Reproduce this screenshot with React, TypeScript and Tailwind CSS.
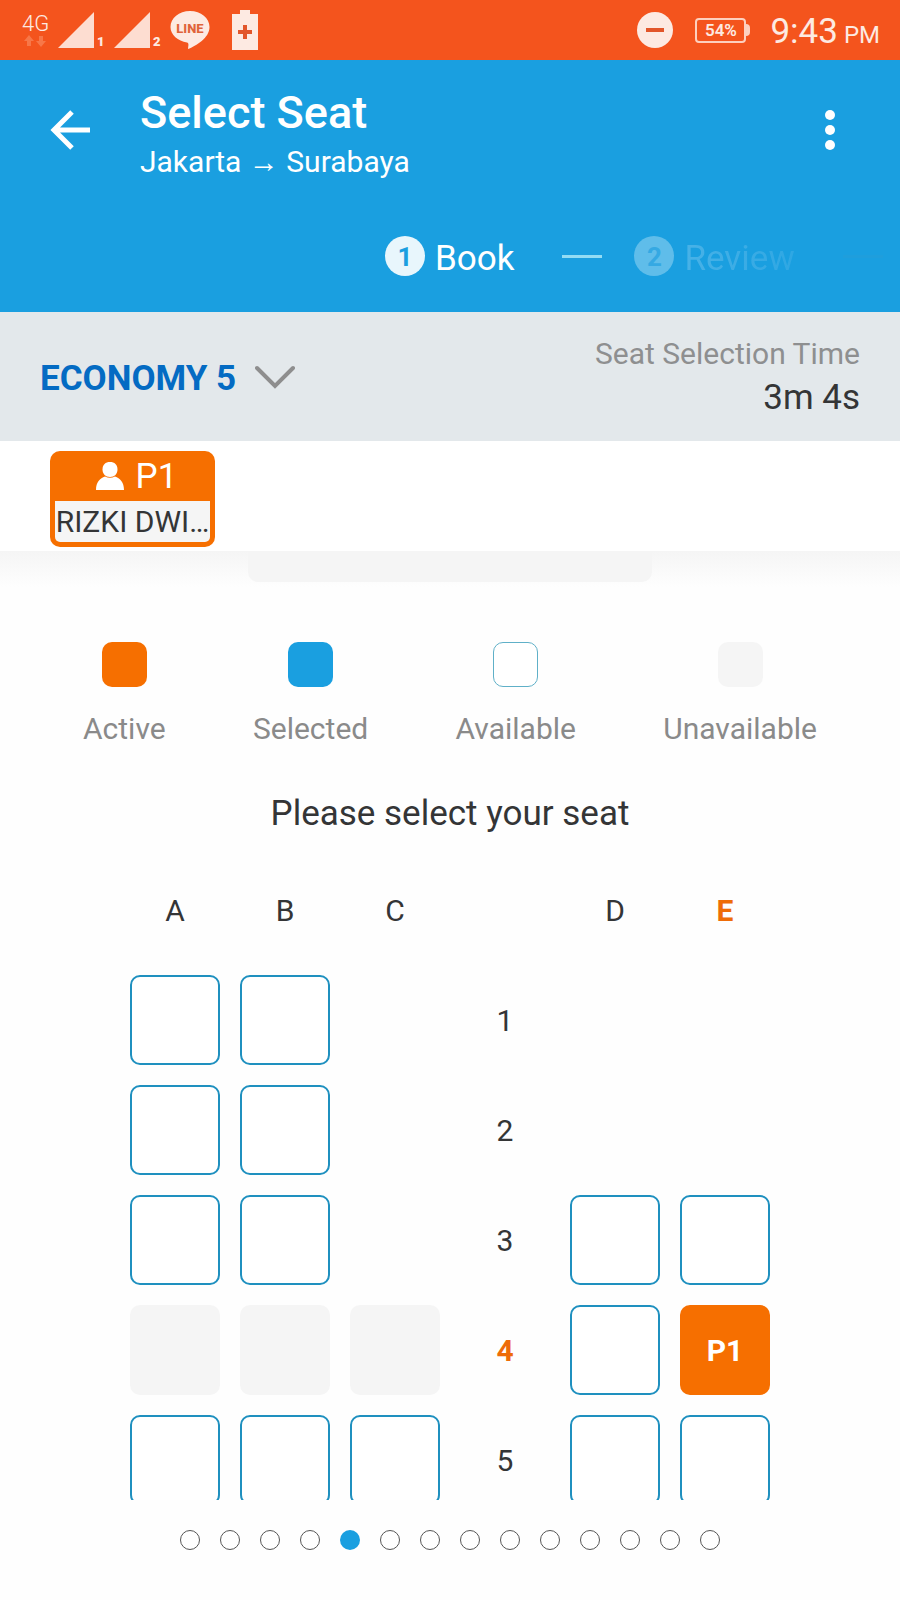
import React, { useState } from 'react';
import clsx from 'clsx';

type SeatState = 'available' | 'unavailable' | 'none';

interface SeatRow {
  row: number;
  seats: SeatState[];
}

const COLUMNS = ['A', 'B', 'C', 'D', 'E'];

const ROWS: SeatRow[] = [
  { row: 1, seats: ['available', 'available', 'none', 'none', 'none'] },
  { row: 2, seats: ['available', 'available', 'none', 'none', 'none'] },
  { row: 3, seats: ['available', 'available', 'none', 'available', 'available'] },
  { row: 4, seats: ['unavailable', 'unavailable', 'unavailable', 'available', 'available'] },
  { row: 5, seats: ['available', 'available', 'available', 'available', 'available'] },
];

const LEGEND = [
  { label: 'Active', swatch: 'bg-[#f66f00]' },
  { label: 'Selected', swatch: 'bg-[#1a9fe0]' },
  { label: 'Available', swatch: 'bg-white border border-[#5fb0c8]' },
  { label: 'Unavailable', swatch: 'bg-[#f5f5f5]' },
];

const WAGONS = Array.from({ length: 14 }, (_, i) => i + 1);

const SignalIcon = ({ sim }: { sim: number }) => (
  <div className="flex items-end">
    <svg width="36" height="36" viewBox="0 0 36 36" aria-hidden="true">
      <path d="M0 36L36 0V36Z" fill="#fdddd1" />
    </svg>
    <span className="w-5 pl-[3px] text-[13px] leading-[12px] font-black">{sim}</span>
  </div>
);

const StatusBar = () => (
  <div className="flex h-[60px] shrink-0 items-center justify-between bg-[#f4541d] pr-5 pl-[22px] text-[#fdeae2]">
    <div className="flex items-center">
      <div className="flex w-9 flex-col">
        <span className="text-[22px] leading-[22px] font-light">4G</span>
        <svg width="26" height="12" viewBox="0 0 26 12" fill="#f77748" aria-hidden="true">
          <path d="M7 0L12 6H9V11H5V6H2Z" />
          <path d="M19 12L14 6H17V1H21V6H24Z" />
        </svg>
      </div>
      <SignalIcon sim={1} />
      <SignalIcon sim={2} />
      <svg width="40" height="40" viewBox="0 0 40 40" className="mr-[22px]" aria-label="LINE">
        <path d="M20 1C9 1 0.500 8 0.500 17C0.500 25 8 31 17 32.500C19 33 18.500 35 18 39C26 36 39.500 28 39.500 17C39.500 8 31 1 20 1Z" fill="#fdeae2" />
        <text x="20" y="23" textAnchor="middle" fontSize="13" fontWeight="800" fill="#e0633a">LINE</text>
      </svg>
      <svg width="26" height="40" viewBox="0 0 26 40" aria-hidden="true">
        <path d="M8 0H18V4H26V40H0V4H8Z" fill="#fdeae2" />
        <path d="M11 15H15V20H20V24H15V29H11V24H6V20H11Z" fill="#e2562a" />
      </svg>
    </div>
    <div className="flex items-center">
      <svg width="36" height="36" viewBox="0 0 36 36" className="mr-[22px]" aria-hidden="true">
        <circle cx="18" cy="18" r="18" fill="#fdeae2" />
        <path d="M9 16H27V20H9Z" fill="#e2562a" />
      </svg>
      <div className="mr-5 flex items-center">
        <span className="flex h-[25px] w-[51px] items-center justify-center rounded border-2 border-[#fdd0be] text-[17px] leading-[20px] font-semibold">
          54%
        </span>
        <span className="h-3 w-1 rounded-r bg-[#fdd0be]" />
      </div>
      <div className="flex items-baseline gap-[6px] pt-[6px]">
        <span className="text-[35px] leading-[40px]">9:43</span>
        <span className="text-[24px] leading-[40px]">PM</span>
      </div>
    </div>
  </div>
);

const Header = () => (
  <header className="h-[252px] shrink-0 overflow-hidden bg-[#1a9fe0] text-white">
    <div className="flex h-[140px] items-center justify-between pr-[50px] pl-[50px]">
      <div className="flex items-center gap-[50px]">
        <button type="button" aria-label="Back">
          <svg width="40" height="40" viewBox="0 0 40 40" fill="none" stroke="white" strokeWidth="5">
            <path d="M40 20H4M22 2L4 20L22 38" />
          </svg>
        </button>
        <div className="pt-[10px]">
          <h1 className="text-[45px] leading-[54px] font-medium">Select Seat</h1>
          <p className="text-[30px] leading-[44px]">Jakarta → Surabaya</p>
        </div>
      </div>
      <button type="button" aria-label="More options" className="flex w-10 justify-center">
        <svg width="12" height="42" viewBox="0 0 12 42" fill="white">
          <circle cx="6" cy="6" r="5" />
          <circle cx="6" cy="21" r="5" />
          <circle cx="6" cy="36" r="5" />
        </svg>
      </button>
    </div>
    <ol className="mt-9 flex h-10 items-center pl-[calc(50%-65px)] text-[35px] leading-[40px] whitespace-nowrap">
      <li className="flex items-center gap-[10px]">
        <span className="flex size-10 items-center justify-center rounded-full bg-[#e8f6fc] pt-[2px] text-[26px] font-bold text-[#1a9fe0]">1</span>
        <span className="pt-[5px]">Book</span>
      </li>
      <li aria-hidden="true" className="mr-8 ml-12 h-[3px] w-10 shrink-0 bg-[#93dcf4]" />
      <li className="flex items-center gap-[10px]">
        <span className="flex size-10 items-center justify-center rounded-full bg-[#5fbdea] pt-[2px] text-[26px] font-bold text-[#35a9e3]">2</span>
        <span className="bg-gradient-to-r from-[#48b2e7] to-[#2ea7e3] bg-clip-text pt-[5px] text-transparent">Review</span>
      </li>
      <li aria-hidden="true" className="ml-12 h-[3px] w-10 shrink-0 bg-[#1f9edc]" />
    </ol>
  </header>
);

const WagonBar = () => (
  <div className="flex h-[129px] shrink-0 items-center justify-between bg-[#e3e8eb] px-10">
    <label className="relative flex items-center">
      <select
        aria-label="Wagon"
        defaultValue="ECONOMY 5"
        className="appearance-none bg-transparent pt-1 pr-[58px] text-[35px] leading-[42px] font-bold text-[#046bc3] outline-none"
      >
        <option>ECONOMY 5</option>
      </select>
      <svg width="40" height="24" viewBox="0 0 40 24" fill="none" stroke="#8e8e8e" strokeWidth="4" strokeLinecap="round" className="pointer-events-none absolute right-0">
        <path d="M2 3L20 21L38 3" />
      </svg>
    </label>
    <div className="text-right">
      <p className="text-[30px] leading-[42px] text-[#8e8f90]">Seat Selection Time</p>
      <p className="text-[35px] leading-[46px] text-[#343536]">3m 4s</p>
    </div>
  </div>
);

const PassengerBar = () => (
  <div className="h-[110px] shrink-0 bg-white px-[50px] pt-[10px]">
    <button type="button" className="flex h-[96px] w-[165px] flex-col rounded-[10px] bg-[#f66f00] px-[5px] pb-[5px]">
      <span className="flex h-[50px] w-full items-center justify-center gap-3 pl-2 text-[35px] leading-[50px] text-white">
        <svg width="28" height="28" viewBox="0 0 28 28" fill="white" aria-hidden="true">
          <path d="M14 0C18.500 0 21.500 2.500 21.500 7.500C21.500 12 18.500 15 14 15C9.500 15 6.500 12 6.500 7.500C6.500 2.500 9.500 0 14 0Z" />
          <path d="M0 28C0 20 4 16.500 9 14.500Q14 17 19 14.500C24 16.500 28 20 28 28Z" />
        </svg>
        <span className="pt-[2px]">P1</span>
      </span>
      <span className="h-[41px] w-full rounded-b-[5px] bg-[#f5f5f5] text-[30px] leading-[42px] whitespace-nowrap text-[#343536]">
        RIZKI DWI…
      </span>
    </button>
  </div>
);

export default function App() {
  const [selected, setSelected] = useState({ row: 4, column: 'E' });
  const [wagon, setWagon] = useState(5);

  const renderSeat = (row: number, column: string, state: SeatState) => {
    if (state === 'none') return <span key={column} />;
    const active = selected.row === row && selected.column === column;
    return (
      <button
        key={column}
        type="button"
        disabled={state === 'unavailable'}
        aria-label={`Seat ${row}${column}`}
        onClick={() => setSelected({ row, column })}
        className={clsx(
          'size-[90px] rounded-[10px]',
          active && 'bg-[#f66f00] pt-[2px] font-bold text-white',
          !active && state === 'available' && 'border-2 border-[#1f90bf] bg-white',
          state === 'unavailable' && 'bg-[#f5f5f5]'
        )}
      >
        {active && 'P1'}
      </button>
    );
  };

  return (
    <div className="flex h-screen flex-col bg-[#fefefe] font-[Roboto,sans-serif]">
      <StatusBar />
      <Header />
      <WagonBar />
      <PassengerBar />

      <main className="min-h-0 flex-1 overflow-y-auto bg-gradient-to-b from-[#f5f5f5] to-[#fefefe] to-[36px] [scrollbar-width:none]">
        <div className="mx-auto h-[31px] w-[404px] rounded-b-[10px] bg-[#f5f5f5]" />

        {/* Legend */}
        <ul className="mt-[60px] flex justify-between px-[83px] text-[30px] leading-[36px] text-[#8a8a8a]">
          {LEGEND.map(({ label, swatch }) => (
            <li key={label} className="flex flex-col items-center gap-6">
              <span className={clsx('size-[45px] rounded-[10px]', swatch)} />
              {label}
            </li>
          ))}
        </ul>

        <h2 className="mt-[45px] text-center text-[35px] leading-[44px] text-[#343536]">Please select your seat</h2>

        {/* Seat map */}
        <div className="mx-auto mt-[29px] grid w-[640px] grid-cols-6 gap-5 text-center text-[30px] leading-[36px] text-[#343536]">
          {COLUMNS.map((column) => (
            <span
              key={column}
              className={clsx(
                'flex h-[90px] items-center justify-center pt-[2px]',
                column === 'D' && 'col-start-5',
                column === selected.column && 'font-bold text-[#ee6c08]'
              )}
            >
              {column}
            </span>
          ))}
          {ROWS.map(({ row, seats }) => (
            <React.Fragment key={row}>
              {seats.slice(0, 3).map((state, i) => renderSeat(row, COLUMNS[i], state))}
              <span
                className={clsx(
                  'flex h-[90px] items-center justify-center pt-[2px]',
                  row === selected.row && 'font-bold text-[#ee6c08]'
                )}
              >
                {row}
              </span>
              {seats.slice(3).map((state, i) => renderSeat(row, COLUMNS[i + 3], state))}
            </React.Fragment>
          ))}
        </div>
      </main>

      {/* Wagon pager */}
      <nav className="flex h-[100px] shrink-0 justify-center gap-5 pt-[30px]">
        {WAGONS.map((n) => (
          <button
            key={n}
            type="button"
            aria-label={`Wagon ${n}`}
            onClick={() => setWagon(n)}
            className={clsx('size-5 rounded-full', n === wagon ? 'bg-[#1a9fe0]' : 'border border-[#555555] bg-white')}
          />
        ))}
      </nav>
    </div>
  );
}
